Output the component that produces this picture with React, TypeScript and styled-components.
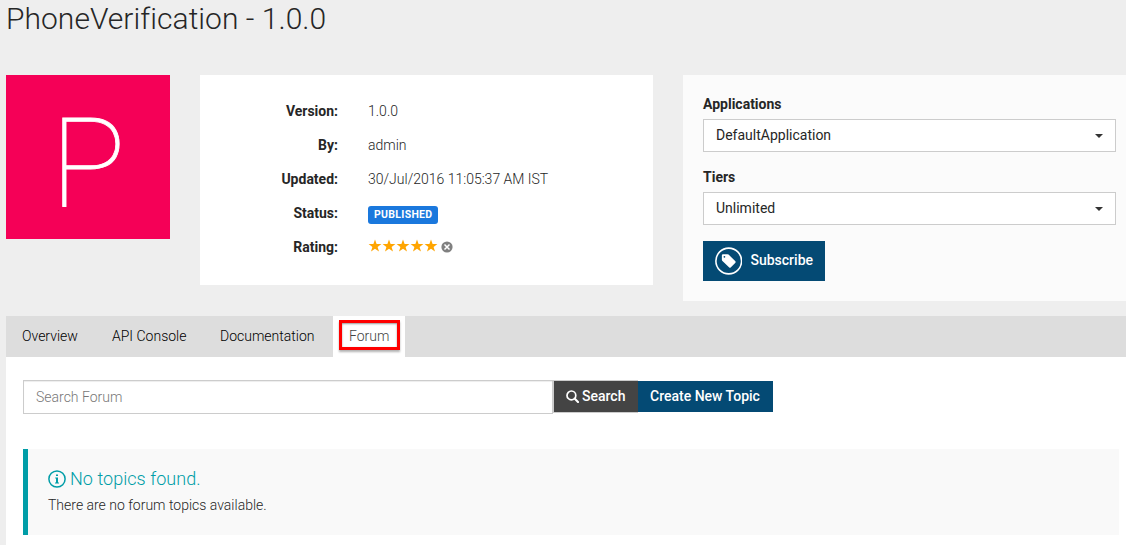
import React from "react";
import styled, { createGlobalStyle, css } from "styled-components";

const GlobalStyle = createGlobalStyle`
  * { box-sizing: border-box; }
  html, body { margin: 0; padding: 0; }
  body {
    background: #eeeeee;
    color: #262626;
    font-family: Roboto, sans-serif;
    font-size: 14px;
    font-weight: 300;
    line-height: 20px;
    overflow: hidden;
  }
`;

const Page = styled.main`
  display: flex;
  flex-direction: column;
  height: 545px;
  padding-left: 6px;
`;

const Title = styled.h1`
  margin: 0;
  height: 75px;
  font-size: 30px;
  font-weight: 300;
  line-height: 37px;
  letter-spacing: 0.03px;
  white-space: nowrap;
`;

const Summary = styled.section`
  display: grid;
  grid-template-columns: 164px 453px 1fr;
  column-gap: 30px;
  align-items: start;
  height: 241px;
`;

const Thumbnail = styled.div`
  display: flex;
  align-items: center;
  justify-content: center;
  height: 164px;
  padding-top: 13px;
  background: #f50057;
  color: #ffffff;
  font-size: 125px;
  font-weight: 100;
  line-height: 1;
  -webkit-text-stroke: 0.8px #ffffff;
`;

const Details = styled.dl`
  display: grid;
  grid-template-columns: 138px 1fr;
  grid-auto-rows: 34px;
  column-gap: 30px;
  height: 210px;
  margin: 0;
  padding-top: 19px;
  background: #ffffff;
  line-height: 34px;
`;

const Term = styled.dt`
  font-weight: 700;
  text-align: right;
`;

const Value = styled.dd`
  display: flex;
  align-items: center;
  margin: 0;
`;

const Badge = styled.span`
  height: 18px;
  margin-top: 3px;
  padding: 0 6px;
  border-radius: 3px;
  background: #1a78dd;
  color: #ffffff;
  font-size: 10.5px;
  font-weight: 700;
  letter-spacing: 0.3px;
  line-height: 17px;
`;

const Stars = styled.span`
  display: flex;
  margin: -3px 3px 0 0;
`;

const SubscribePanel = styled.aside`
  display: flex;
  flex-direction: column;
  align-items: flex-start;
  height: 226px;
  padding: 19px 10px 0 20px;
  background: #fbfbfb;
`;

const Label = styled.label`
  height: 25px;
  font-weight: 700;
`;

const Select = styled.div`
  display: flex;
  align-items: center;
  justify-content: space-between;
  align-self: stretch;
  height: 33px;
  margin-bottom: 15px;
  padding: 0 12px;
  border: 1px solid #cccccc;
  background: #ffffff;
  font-weight: 400;
  line-height: 18px;
`;

const SelectText = styled.span`
  padding-bottom: 2px;
`;

const Caret = styled.span`
  border-top: 4px solid #333333;
  border-right: 4px solid transparent;
  border-left: 4px solid transparent;
`;

const Button = styled.button<{ $kind?: "search" | "subscribe" }>`
  display: flex;
  align-items: center;
  height: 31px;
  padding: 0 12px;
  border: 0;
  background: #044a74;
  color: #ffffff;
  font: 500 14px/20px Roboto, sans-serif;
  white-space: nowrap;
  ${(p) =>
    !p.$kind &&
    css`
      width: 135px;
    `}
  ${(p) =>
    p.$kind === "search" &&
    css`
      gap: 3px;
      width: 84px;
      background: #444444;
    `}
  ${(p) =>
    p.$kind === "subscribe" &&
    css`
      gap: 8px;
      width: 122px;
      height: 40px;
      margin-top: 1px;
    `}
`;

const ButtonText = styled.span`
  padding-bottom: 2px;
`;

const TabBar = styled.nav`
  display: flex;
  height: 41px;
  background: #dddddd;
`;

const Tab = styled.a<{ $width: number }>`
  width: ${(p) => p.$width}px;
  padding-left: 16px;
  color: #000000;
  line-height: 40px;
`;

const ActiveTab = styled.a`
  width: 72px;
  padding: 4px 5px 0 6px;
  background: #ffffff;
  color: #444444;
`;

const Highlight = styled.span`
  display: block;
  height: 30px;
  padding-left: 7px;
  border: 3px solid #ff0000;
  box-shadow: 0 2px 2px rgba(0, 0, 0, 0.3), inset 0 1px 2px rgba(0, 0, 0, 0.4);
  line-height: 26px;
`;

const Content = styled.section`
  flex: 1;
  padding: 23px 7px 0 17px;
  background: #ffffff;
`;

const SearchRow = styled.div`
  display: flex;
  height: 69px;
  align-items: flex-start;
`;

const SearchInput = styled.input`
  width: 530px;
  height: 34px;
  padding: 0 12px;
  border: 1px solid #cccccc;
  border-radius: 0;
  box-shadow: inset 0 1px 1px rgba(0, 0, 0, 0.075);
  font: 300 14px/20px Roboto, sans-serif;
  &::placeholder { color: #777777; opacity: 1; }
`;

const SearchAction = styled.div`
  padding: 1px 0 0 1px;
  box-shadow: inset 1px 1px #cccccc, 0 1px #cccccc;
`;

const CreateAction = styled.div`
  padding-top: 1px;
`;

const Notice = styled.div`
  height: 86px;
  padding: 19px 20px 0;
  border-left: 5px solid #009da7;
  background: #f9f9f9;
`;

const NoticeTitle = styled.h4`
  display: flex;
  align-items: center;
  gap: 4px;
  margin: 0 0 6px;
  color: #009da7;
  font-size: 18px;
  font-weight: 300;
  line-height: 21px;
  letter-spacing: 0.04px;
`;

const NoticeText = styled.p`
  margin: 0;
`;

const InfoIcon = styled.svg`
  margin-top: 1px;
`;

const TagIcon = () => (
  <svg width="28" height="28" viewBox="0 0 28 28">
    <circle cx="14" cy="14" r="13.1" fill="none" stroke="#fff" strokeWidth="1.6" />
    <path
      fill="#fff"
      fillRule="evenodd"
      d="M7 8.2Q7 7 8.2 7H12.6Q13.3 7 13.8 7.5L20.8 14.3Q21.4 15 20.8 15.7L16 20.5Q15.2 21.1 14.5 20.5L7.6 13.9Q7 13.4 7 12.6ZM9.6 8.8A0.9 0.9 0 1 0 9.6 10.6A0.9 0.9 0 1 0 9.6 8.8Z"
    />
  </svg>
);

const StarIcon = () => (
  <svg width="14" height="14" viewBox="0 0 14 14">
    <path
      fill="#ffa500"
      d="M7 0.5L8.6 5H13.4L9.6 7.9L11 12.6L7 9.8L3 12.6L4.4 7.9L0.6 5H5.4Z"
    />
  </svg>
);

const SearchIcon = () => (
  <svg width="13" height="13" viewBox="0 0 13 13" fill="none" stroke="#fff">
    <circle cx="5.4" cy="5.4" r="4.4" strokeWidth="1.7" />
    <path d="M8.6 8.6L12 12" strokeWidth="2.1" strokeLinecap="round" />
  </svg>
);

const RemoveIcon = () => (
  <svg width="12" height="12" viewBox="0 0 12 12">
    <circle cx="6" cy="6" r="5.6" fill="#808080" />
    <path d="M3.5 3.5L8.5 8.5M8.5 3.5L3.5 8.5" stroke="#fff" strokeWidth="1.5" />
  </svg>
);

export default function App() {
  return (
    <>
      <GlobalStyle />
      <Page>
        <Title>PhoneVerification - 1.0.0</Title>
        <Summary>
          <Thumbnail>P</Thumbnail>
          <Details>
            <Term>Version:</Term>
            <Value>1.0.0</Value>
            <Term>By:</Term>
            <Value>admin</Value>
            <Term>Updated:</Term>
            <Value>30/Jul/2016 11:05:37 AM IST</Value>
            <Term>Status:</Term>
            <Value>
              <Badge>PUBLISHED</Badge>
            </Value>
            <Term>Rating:</Term>
            <Value>
              <Stars>
                {[1, 2, 3, 4, 5].map((n) => (
                  <StarIcon key={n} />
                ))}
              </Stars>
              <RemoveIcon />
            </Value>
          </Details>
          <SubscribePanel>
            <Label>Applications</Label>
            <Select>
              <SelectText>DefaultApplication</SelectText>
              <Caret />
            </Select>
            <Label>Tiers</Label>
            <Select>
              <SelectText>Unlimited</SelectText>
              <Caret />
            </Select>
            <Button $kind="subscribe">
              <TagIcon />
              <ButtonText>Subscribe</ButtonText>
            </Button>
          </SubscribePanel>
        </Summary>
        <TabBar>
          <Tab $width={90}>Overview</Tab>
          <Tab $width={108}>API Console</Tab>
          <Tab $width={129}>Documentation</Tab>
          <ActiveTab>
            <Highlight>Forum</Highlight>
          </ActiveTab>
        </TabBar>
        <Content>
          <SearchRow>
            <SearchInput placeholder="Search Forum" />
            <SearchAction>
              <Button $kind="search">
                <SearchIcon />
                <ButtonText>Search</ButtonText>
              </Button>
            </SearchAction>
            <CreateAction>
              <Button>
                <ButtonText>Create New Topic</ButtonText>
              </Button>
            </CreateAction>
          </SearchRow>
          <Notice>
            <NoticeTitle>
              <InfoIcon width="18" height="18" viewBox="0 0 18 18">
                <circle cx="9" cy="9" r="8.1" fill="none" stroke="currentColor" strokeWidth="1.5" />
                <path fill="currentColor" d="M8 4.4h2v1.7H8zM7.2 7.6H10v5h1v1H7v-1h1V8.6H7.2z" />
              </InfoIcon>
              No topics found.
            </NoticeTitle>
            <NoticeText>There are no forum topics available.</NoticeText>
          </Notice>
        </Content>
      </Page>
    </>
  );
}
